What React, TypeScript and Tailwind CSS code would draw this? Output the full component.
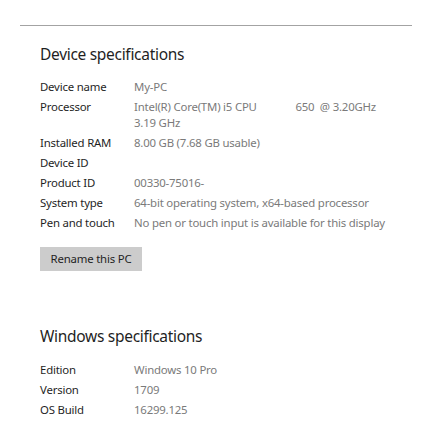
const device: [string, string][] = [
  ["Device name", "My-PC"],
  ["Processor", "Intel(R) Core(TM) i5 CPU              650  @ 3.20GHz\n3.19 GHz"],
  ["Installed RAM", "8.00 GB (7.68 GB usable)"],
  ["Device ID", ""],
  ["Product ID", "00330-75016-"],
  ["System type", "64-bit operating system, x64-based processor"],
  ["Pen and touch", "No pen or touch input is available for this display"],
];

const windows: [string, string][] = [
  ["Edition", "Windows 10 Pro"],
  ["Version", "1709"],
  ["OS Build", "16299.125"],
];

function Rows({ rows }: { rows: [string, string][] }) {
  return (
    <div className="flex flex-col gap-1">
      {rows.map(([label, value]) => (
        <div key={label} className="flex text-[11.4px] leading-4 tracking-[-0.2px]">
          <div className="w-[94px] shrink-0 text-[#1f1f1f]">{label}</div>
          <div className="whitespace-pre text-[#7a7a7a]">{value}</div>
        </div>
      ))}
    </div>
  );
}

export default function App() {
  return (
    <main
      className="w-[432px] h-[440px] bg-white pt-[25px] px-5"
      style={{ fontFamily: '"Noto Sans", "Open Sans", sans-serif' }}
    >
      <div className="border-t border-[#a3a3a3]" />
      <div className="pl-5">
        <h2 className="mt-4 mb-[13px] text-[15.5px] leading-6 tracking-[-0.3px] text-[#1f1f1f]">
          Device specifications
        </h2>
        <Rows rows={device} />
        <button className="mt-4 h-6 w-[102px] bg-[#cccccc] text-[11.4px] tracking-[-0.2px] text-[#1f1f1f]">
          Rename this PC
        </button>

        <h2 className="mt-[53px] mb-[14px] text-[15.5px] leading-6 tracking-[-0.3px] text-[#1f1f1f]">
          Windows specifications
        </h2>
        <Rows rows={windows} />
      </div>
    </main>
  );
}
